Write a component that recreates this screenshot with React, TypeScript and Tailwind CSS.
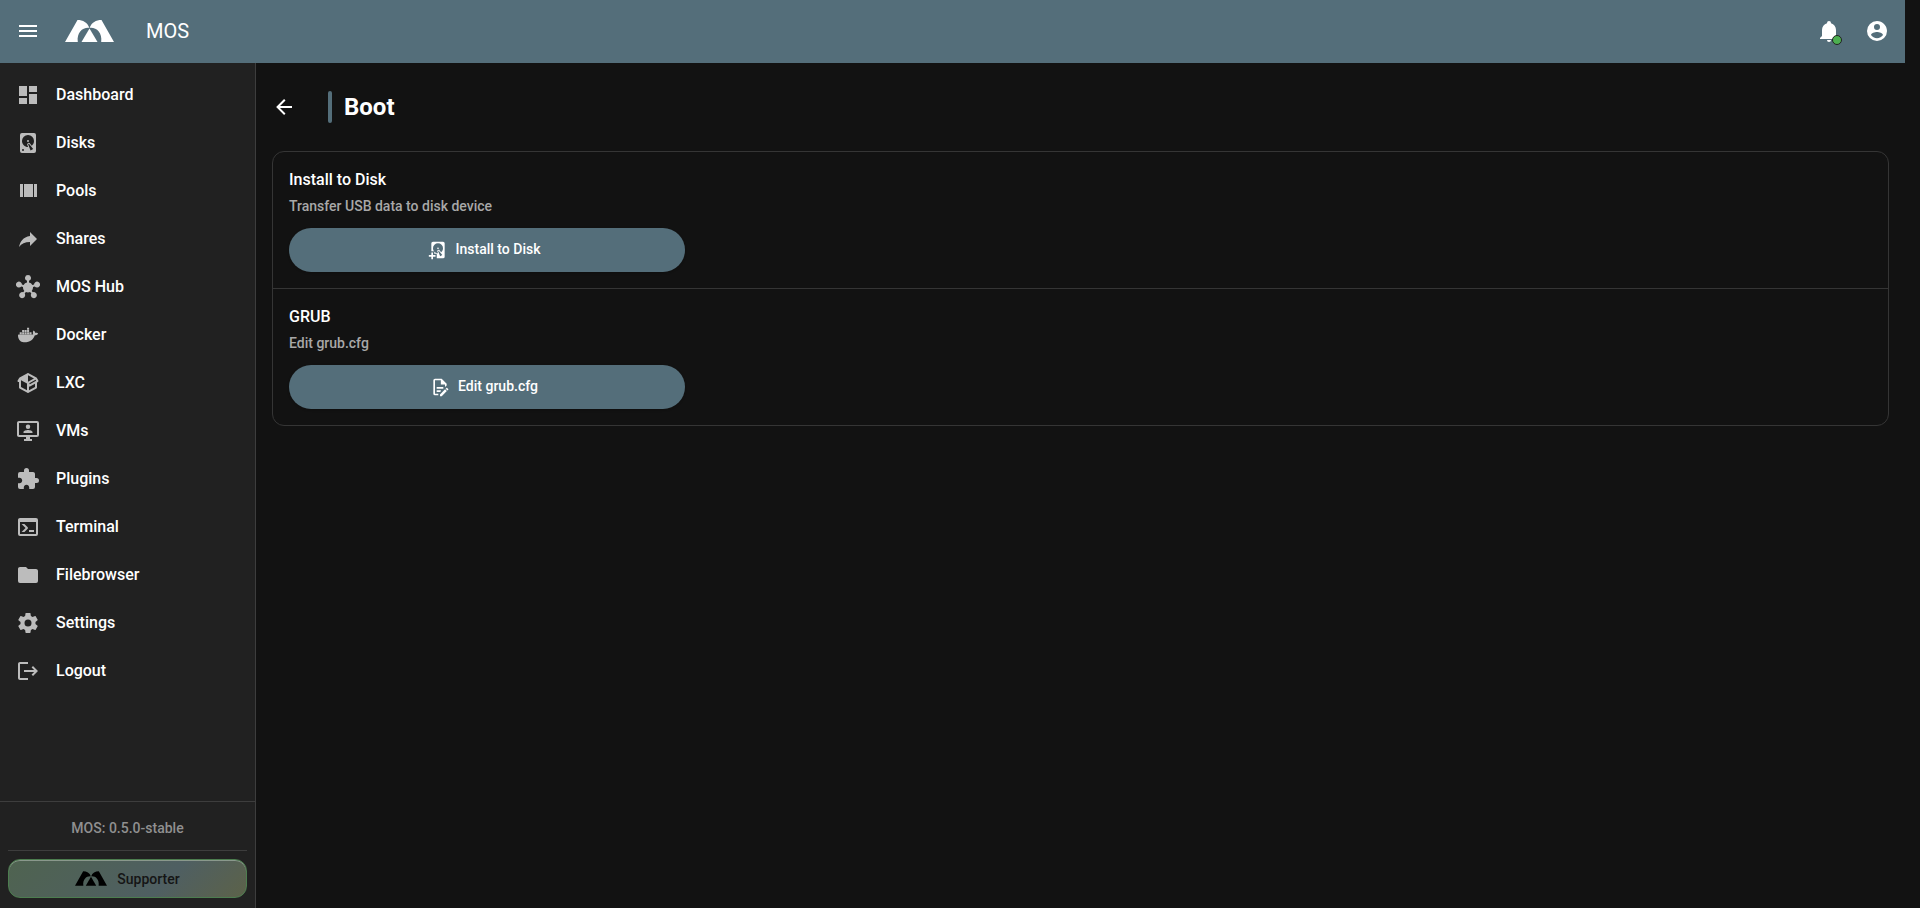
const icons = {
  menu: 'M3,6H21V8H3V6M3,11H21V13H3V11M3,16H21V18H3V16Z',
  dashboard: 'M13,3V9H21V3M13,21H21V11H13M3,21H11V15H3M3,13H11V3H3V13Z',
  disk: 'M6,2H18A2,2 0 0,1 20,4V20A2,2 0 0,1 18,22H6A2,2 0 0,1 4,20V4A2,2 0 0,1 6,2M12,4A6,6 0 0,0 6,10C6,13.31 8.69,16 12.1,16L11.22,13.77C10.95,13.29 11.11,12.68 11.59,12.4L12.45,11.9C12.93,11.63 13.54,11.79 13.82,12.27L15.74,14.69C17.12,13.59 18,11.9 18,10A6,6 0 0,0 12,4M12,9A1,1 0 0,1 13,10A1,1 0 0,1 12,11A1,1 0 0,1 11,10A1,1 0 0,1 12,9M7,18A1,1 0 0,0 6,19A1,1 0 0,0 7,20A1,1 0 0,0 8,19A1,1 0 0,0 7,18M12.09,13.27L14.58,19.58L17.17,18.08L12.95,12.77L12.09,13.27Z',
  diskPlus:
    'M6,2H18A2,2 0 0,1 20,4V20A2,2 0 0,1 18,22H10.500V16.500H7.500V13.500H4V4A2,2 0 0,1 6,2M12,4A6,6 0 0,0 6,10C6,13.31 8.69,16 12.1,16L11.22,13.77C10.95,13.29 11.11,12.68 11.59,12.4L12.45,11.9C12.93,11.63 13.54,11.79 13.82,12.27L15.74,14.69C17.12,13.59 18,11.9 18,10A6,6 0 0,0 12,4M12,9A1,1 0 0,1 13,10A1,1 0 0,1 12,11A1,1 0 0,1 11,10A1,1 0 0,1 12,9M12.09,13.27L14.58,19.58L17.17,18.08L12.95,12.77L12.09,13.27M4,15H6V18H9V20H6V23H4V20H1V18H4V15Z',
  pools: 'M8,18H17V5H8M18,5V18H21V5M4,18H7V5H4V18Z',
  share: 'M21,12L14,5V9C7,10 4,15 3,20C5.5,16.5 9,14.9 14,14.9V19L21,12Z',
  hub: 'M12,0A3,3 0 0,1 13,5.83V7.6A5,5 0 0,1 16.400,10.100L18.050,9.550A3,3 0 1,1 18.700,11.450L17,12.030A5,5 0 0,1 15.700,15.900L16.850,17.300A3,3 0 1,1 15.300,18.550L14.100,17.050A5,5 0 0,1 9.900,17.050L8.700,18.550A3,3 0 1,1 7.150,17.300L8.300,15.900A5,5 0 0,1 7,12.030L5.300,11.450A3,3 0 1,1 5.950,9.550L7.600,10.100A5,5 0 0,1 11,7.600V5.830A3,3 0 0,1 12,0Z',
  docker:
    'M21.81 10.25C21.75 10.21 21.25 9.82 20.17 9.82C19.89 9.82 19.61 9.85 19.33 9.9C19.12 8.5 17.95 7.79 17.9 7.76L17.61 7.59L17.43 7.86C17.19 8.22 17 8.63 16.92 9.05C16.72 9.85 16.84 10.61 17.25 11.26C16.76 11.54 15.96 11.61 15.79 11.61H2.62C2.28 11.61 2 11.89 2 12.24C2 13.39 2.18 14.54 2.58 15.62C3.03 16.81 3.71 17.69 4.58 18.23C5.56 18.83 7.17 19.17 9 19.17C9.79 19.17 10.61 19.1 11.42 18.95C12.54 18.75 13.62 18.36 14.61 17.79C15.43 17.32 16.16 16.72 16.78 16C17.82 14.83 18.43 13.5 18.89 12.35H19.07C20.23 12.35 20.94 11.89 21.33 11.5C21.59 11.26 21.78 10.97 21.92 10.63L22 10.39L21.81 10.25M3.7 9.34H5.77V11.24H3.7V9.34M6.13 9.34H8.2V11.24H6.13V9.34M8.6 9.34H10.67V11.24H8.6V9.34M11.04 9.34H13.11V11.24H11.04V9.34M13.48 9.34H15.55V11.24H13.48V9.34M6.13 7.06H8.2V8.96H6.13V7.06M8.6 7.06H10.67V8.96H8.6V7.06M11.04 7.06H13.11V8.96H11.04V7.06M11.04 4.8H13.11V6.7H11.04V4.8Z',
  box: 'M2,10.96C1.5,10.68 1.35,10.07 1.63,9.59L3.13,7C3.24,6.8 3.41,6.66 3.6,6.58L11.43,2.18C11.59,2.06 11.79,2 12,2C12.21,2 12.41,2.06 12.57,2.18L20.47,6.62C20.66,6.72 20.82,6.88 20.91,7.08L22.36,9.6C22.64,10.08 22.47,10.69 22,10.96L21,11.54V16.5C21,16.88 20.79,17.21 20.47,17.38L12.57,21.82C12.41,21.94 12.21,22 12,22C11.79,22 11.59,21.94 11.43,21.82L3.53,17.38C3.21,17.21 3,16.88 3,16.5V10.96C2.7,11.13 2.32,11.14 2,10.96M12,4.15V4.15L12,10.85V10.85L17.96,7.5L12,4.15M5,15.91L11,19.29V12.58L5,9.21V15.91M19,15.91V12.69L14,15.59C13.67,15.77 13.3,15.76 13,15.6V19.29L19,15.91M13.85,13.36L20.13,9.73L19.55,8.72L13.27,12.35L13.85,13.36Z',
  monitor:
    'M21,16V4H3V16H21M21,2A2,2 0 0,1 23,4V16A2,2 0 0,1 21,18H14V20H16V22H8V20H10V18H3C1.89,18 1,17.1 1,16V4C1,2.89 1.89,2 3,2H21M12,5.5A2.25,2.25 0 0,1 14.25,7.75A2.25,2.25 0 0,1 12,10A2.25,2.25 0 0,1 9.75,7.75A2.25,2.25 0 0,1 12,5.5M16.5,14H7.5V13C7.5,11.67 10.5,11 12,11C13.5,11 16.5,11.67 16.5,13V14Z',
  puzzle:
    'M20.5,11H19V7C19,5.89 18.1,5 17,5H13V3.5A2.5,2.5 0 0,0 10.5,1A2.5,2.5 0 0,0 8,3.5V5H4A2,2 0 0,0 2,7V10.8H3.5C5,10.8 6.2,12 6.2,13.5C6.2,15 5,16.2 3.5,16.2H2V20A2,2 0 0,0 4,22H7.8V20.5C7.8,19 9,17.8 10.5,17.8C12,17.8 13.2,19 13.2,20.5V22H17A2,2 0 0,0 19,20V16H20.5A2.5,2.5 0 0,0 23,13.5A2.5,2.5 0 0,0 20.5,11Z',
  console:
    'M20,19V7H4V19H20M20,3A2,2 0 0,1 22,5V19A2,2 0 0,1 20,21H4A2,2 0 0,1 2,19V5C2,3.89 2.9,3 4,3H20M13,17V15H18V17H13M9.58,13L5.57,9H8.4L11.7,12.3C12.09,12.69 12.09,13.33 11.7,13.72L8.42,17H5.59L9.58,13Z',
  folder: 'M10,4H4C2.89,4 2,4.89 2,6V18A2,2 0 0,0 4,20H20A2,2 0 0,0 22,18V8C22,6.89 21.1,6 20,6H12L10,4Z',
  cog: 'M12,15.5A3.5,3.5 0 0,1 8.5,12A3.5,3.5 0 0,1 12,8.5A3.5,3.5 0 0,1 15.5,12A3.5,3.5 0 0,1 12,15.5M19.43,12.97C19.47,12.65 19.5,12.33 19.5,12C19.5,11.67 19.47,11.34 19.43,11L21.54,9.37C21.73,9.22 21.78,8.95 21.66,8.73L19.66,5.27C19.54,5.05 19.27,4.96 19.05,5.05L16.56,6.05C16.04,5.66 15.5,5.32 14.87,5.07L14.5,2.42C14.46,2.18 14.25,2 14,2H10C9.75,2 9.54,2.18 9.5,2.42L9.13,5.07C8.5,5.32 7.96,5.66 7.44,6.05L4.95,5.05C4.73,4.96 4.46,5.05 4.34,5.27L2.34,8.73C2.21,8.95 2.27,9.22 2.46,9.37L4.57,11C4.53,11.34 4.5,11.67 4.5,12C4.5,12.33 4.53,12.65 4.57,12.97L2.46,14.63C2.27,14.78 2.21,15.05 2.34,15.27L4.34,18.73C4.46,18.95 4.73,19.03 4.95,18.95L7.44,17.94C7.96,18.34 8.5,18.68 9.13,18.93L9.5,21.58C9.54,21.82 9.75,22 10,22H14C14.25,22 14.46,21.82 14.5,21.58L14.87,18.93C15.5,18.67 16.04,18.34 16.56,17.94L19.05,18.95C19.27,19.03 19.54,18.95 19.66,18.73L21.66,15.27C21.78,15.05 21.73,14.78 21.54,14.63L19.43,12.97Z',
  logout:
    'M17 7L15.59 8.41L18.17 11H8V13H18.17L15.59 15.58L17 17L22 12M4 5H12V3H4C2.9 3 2 3.9 2 5V19C2 20.1 2.9 21 4 21H12V19H4V5Z',
  bell: 'M21,19V20H3V19L5,17V11C5,7.9 7.03,5.17 10,4.29C10,4.19 10,4.1 10,4A2,2 0 0,1 12,2A2,2 0 0,1 14,4C14,4.1 14,4.19 14,4.29C16.97,5.17 19,7.9 19,11V17L21,19M14,21A2,2 0 0,1 12,23A2,2 0 0,1 10,21',
  account:
    'M12,19.2C9.5,19.2 7.29,17.92 6,16C6.03,14 10,12.9 12,12.9C14,12.9 17.97,14 18,16C16.71,17.92 14.5,19.2 12,19.2M12,5A3,3 0 0,1 15,8A3,3 0 0,1 12,11A3,3 0 0,1 9,8A3,3 0 0,1 12,5M12,2A10,10 0 0,0 2,12A10,10 0 0,0 12,22A10,10 0 0,0 22,12C22,6.47 17.5,2 12,2Z',
  back: 'M20,11V13H8L13.5,18.5L12.08,19.92L4.16,12L12.08,4.08L13.5,5.5L8,11H20Z',
  fileEdit:
    'M8,12H16V14H8V12M10,20H6V4H13V9H18V12.1L20,10.1V8L14,2H6A2,2 0 0,0 4,4V20A2,2 0 0,0 6,22H10V20M8,18H12.1L13,17.1V16H8V18M20.2,13C20.3,13 20.5,13.1 20.6,13.2L21.9,14.5C22.1,14.7 22.1,15.1 21.9,15.3L20.9,16.3L18.8,14.2L19.8,13.2C19.9,13.1 20,13 20.2,13M20.2,16.9L14.1,23H12V20.9L18.1,14.8L20.2,16.9Z',
};

type IconName = keyof typeof icons;

const navItems: { label: string; href: string; icon: IconName }[] = [
  { label: 'Dashboard', href: '#/dashboard', icon: 'dashboard' },
  { label: 'Disks', href: '#/disks', icon: 'disk' },
  { label: 'Pools', href: '#/pools', icon: 'pools' },
  { label: 'Shares', href: '#/shares', icon: 'share' },
  { label: 'MOS Hub', href: '#/hub', icon: 'hub' },
  { label: 'Docker', href: '#/docker', icon: 'docker' },
  { label: 'LXC', href: '#/lxc', icon: 'box' },
  { label: 'VMs', href: '#/vms', icon: 'monitor' },
  { label: 'Plugins', href: '#/plugins', icon: 'puzzle' },
  { label: 'Terminal', href: '#/terminal', icon: 'console' },
  { label: 'Filebrowser', href: '#/files', icon: 'folder' },
  { label: 'Settings', href: '#/settings', icon: 'cog' },
  { label: 'Logout', href: '#/logout', icon: 'logout' },
];

const actions: { title: string; text: string; button: string; icon: IconName }[] = [
  { title: 'Install to Disk', text: 'Transfer USB data to disk device', button: 'Install to Disk', icon: 'diskPlus' },
  { title: 'GRUB', text: 'Edit grub.cfg', button: 'Edit grub.cfg', icon: 'fileEdit' },
];

function Icon({ name, size = 24 }: { name: IconName; size?: number }) {
  return (
    <svg width={size} height={size} viewBox="0 0 24 24" fill="currentColor" aria-hidden="true" className="shrink-0">
      <path d={icons[name]} />
    </svg>
  );
}

function Logo({ className }: { className: string }) {
  return (
    <svg viewBox="0 0 49 22" fill="currentColor" aria-hidden="true" className={className}>
      <path d="M0 22L12.5 0C18 0 22.5 2.5 24.3 7.8C18 7 11.5 12 12.8 22Z" />
      <path d="M49 22L36.5 0C31 0 26.5 2.5 24.7 7.8C31 7 37.5 12 36.2 22Z" />
      <path d="M24.5 8.5L32.5 22H16.5Z" />
    </svg>
  );
}

function TopBar() {
  return (
    <header className="mr-[15px] flex h-[63px] items-center bg-[#546e7a] px-4 pb-0.5 text-white">
      <button aria-label="Menu">
        <Icon name="menu" />
      </button>
      <Logo className="ml-[25px] h-[22px] w-[49px]" />
      <span className="ml-8 text-xl">MOS</span>
      <div className="ml-auto flex items-center gap-6">
        <button aria-label="Notifications" className="relative">
          <Icon name="bell" />
          <span className="absolute -right-px -bottom-0.5 size-2.5 rounded-full border border-[#212121] bg-[#4caf50]" />
        </button>
        <button aria-label="Account">
          <Icon name="account" />
        </button>
      </div>
    </header>
  );
}

function Sidebar() {
  return (
    <aside className="flex w-64 shrink-0 flex-col border-r border-[#3d3d3d] bg-[#212121]">
      <nav className="py-2">
        {navItems.map(({ label, href, icon }) => (
          <a key={label} href={href} className="flex h-12 items-center gap-4 px-4">
            <span className="text-[#bcbcbc]">
              <Icon name={icon} />
            </span>
            <span className="text-base font-medium text-white">{label}</span>
          </a>
        ))}
      </nav>
      <div className="mt-auto border-t border-[#3d3d3d] px-2 pb-2.5">
        <p className="flex h-[49px] items-center justify-center border-b border-[#3d3d3d] pt-1 text-sm font-medium text-[#909090]">
          MOS: 0.5.0-stable
        </p>
        <button className="mt-2 flex h-[39px] w-full items-center justify-center gap-2.5 rounded-xl border border-[#4c7d4f] bg-linear-[135deg] from-[#4f6350] via-[#4f5f62] via-65% to-[#5c6249] text-sm font-medium text-[#151515] shadow-[inset_0_1px_0_#8a988c]">
          <Logo className="h-[15px] w-8 text-black" />
          Supporter
        </button>
      </div>
    </aside>
  );
}

export default function App() {
  return (
    <div className="flex min-h-screen flex-col bg-[#121212] font-['Roboto',sans-serif]">
      <TopBar />
      <div className="flex flex-1">
        <Sidebar />
        <main className="mr-[15px] flex-1 p-4">
          <div className="flex h-14 items-center">
            <button aria-label="Back" className="text-white">
              <Icon name="back" />
            </button>
            <h1 className="ml-8 flex items-center gap-3 text-2xl font-bold text-white">
              <span className="h-8 w-1 rounded-sm bg-[#546e7a]" />
              Boot
            </h1>
          </div>
          <div className="mt-4 divide-y divide-[#353535] rounded-xl border border-[#353535]">
            {actions.map(({ title, text, button, icon }) => (
              <section key={title} className="p-4">
                <h2 className="text-base font-medium text-white">{title}</h2>
                <p className="mt-1 text-sm font-medium text-[#a8a8a8]">{text}</p>
                <button className="mt-3 flex h-11 w-[396px] items-center justify-center gap-2 rounded-full bg-[#546e7a] pr-1.5 text-sm font-medium text-white shadow-sm">
                  <Icon name={icon} size={20} />
                  <span className="pb-0.5">{button}</span>
                </button>
              </section>
            ))}
          </div>
        </main>
      </div>
    </div>
  );
}
